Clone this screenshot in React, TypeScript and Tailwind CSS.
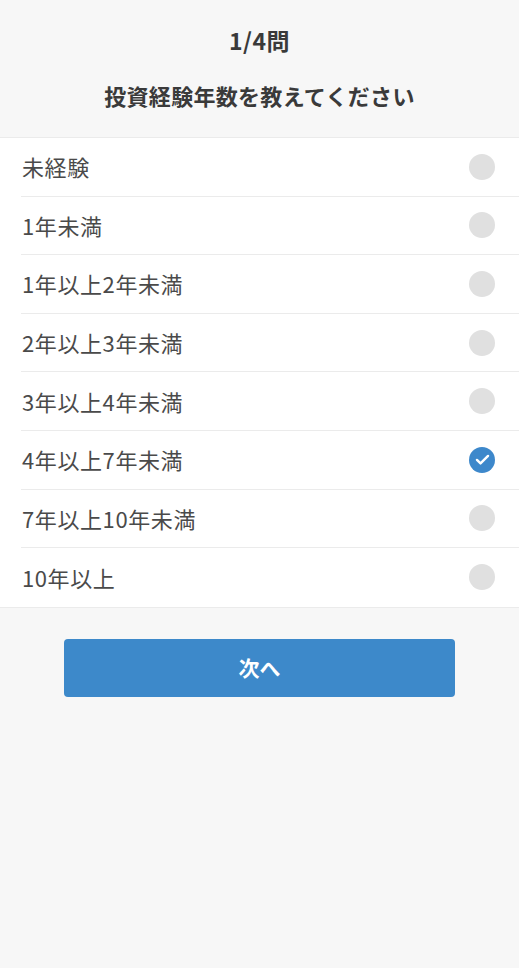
import { useState } from "react"

const options = [
  "未経験",
  "1年未満",
  "1年以上2年未満",
  "2年以上3年未満",
  "3年以上4年未満",
  "4年以上7年未満",
  "7年以上10年未満",
  "10年以上",
]

export default function App() {
  const [selected, setSelected] = useState(5)

  return (
    <div className="min-h-[968px] bg-[#f7f7f7] font-['Noto_Sans_CJK_JP','Noto_Sans',sans-serif]">
      <div className="flex h-[137px] flex-col items-center pt-[25px]">
        <h1 className="text-[23px] leading-[30px] font-bold tracking-[0.5px] text-[#3a3a3a]">1/4問</h1>
        <p className="mt-[25px] text-[22px] leading-[30px] font-bold tracking-[0.3px] text-[#3a3a3a]">
          投資経験年数を教えてください
        </p>
      </div>

      <ul className="border-y border-[#ebebeb] bg-white">
        {options.map((label, i) => (
          <li key={label} className="pl-[21px]">
            <button
              type="button"
              onClick={() => setSelected(i)}
              className={`flex h-[58.6px] w-full items-center justify-between pr-[24px] text-left ${
                i < options.length - 1 ? "border-b border-[#ebebeb]" : ""
              }`}
            >
              <span className="pl-px text-[22px] tracking-[0.6px] text-[#4a4a4a]">{label}</span>
              {selected === i ? (
                <span className="flex h-[26px] w-[26px] items-center justify-center rounded-full bg-[#3d88cb]">
                  <svg viewBox="0 0 24 24" className="h-[19px] w-[19px]" fill="none" stroke="white" strokeWidth="3" strokeLinecap="round" strokeLinejoin="round">
                    <path d="M5 12.5l4.5 4.5L19 7.5" />
                  </svg>
                </span>
              ) : (
                <span className="h-[26px] w-[26px] rounded-full bg-[#e0e0e0]" />
              )}
            </button>
          </li>
        ))}
      </ul>

      <div className="px-[64px] pt-[31px]">
        <button
          type="button"
          className="flex h-[58px] w-full items-center justify-center rounded-[4px] bg-[#3d89ca] text-[21px] font-bold text-white"
        >
          次へ
        </button>
      </div>
    </div>
  )
}
